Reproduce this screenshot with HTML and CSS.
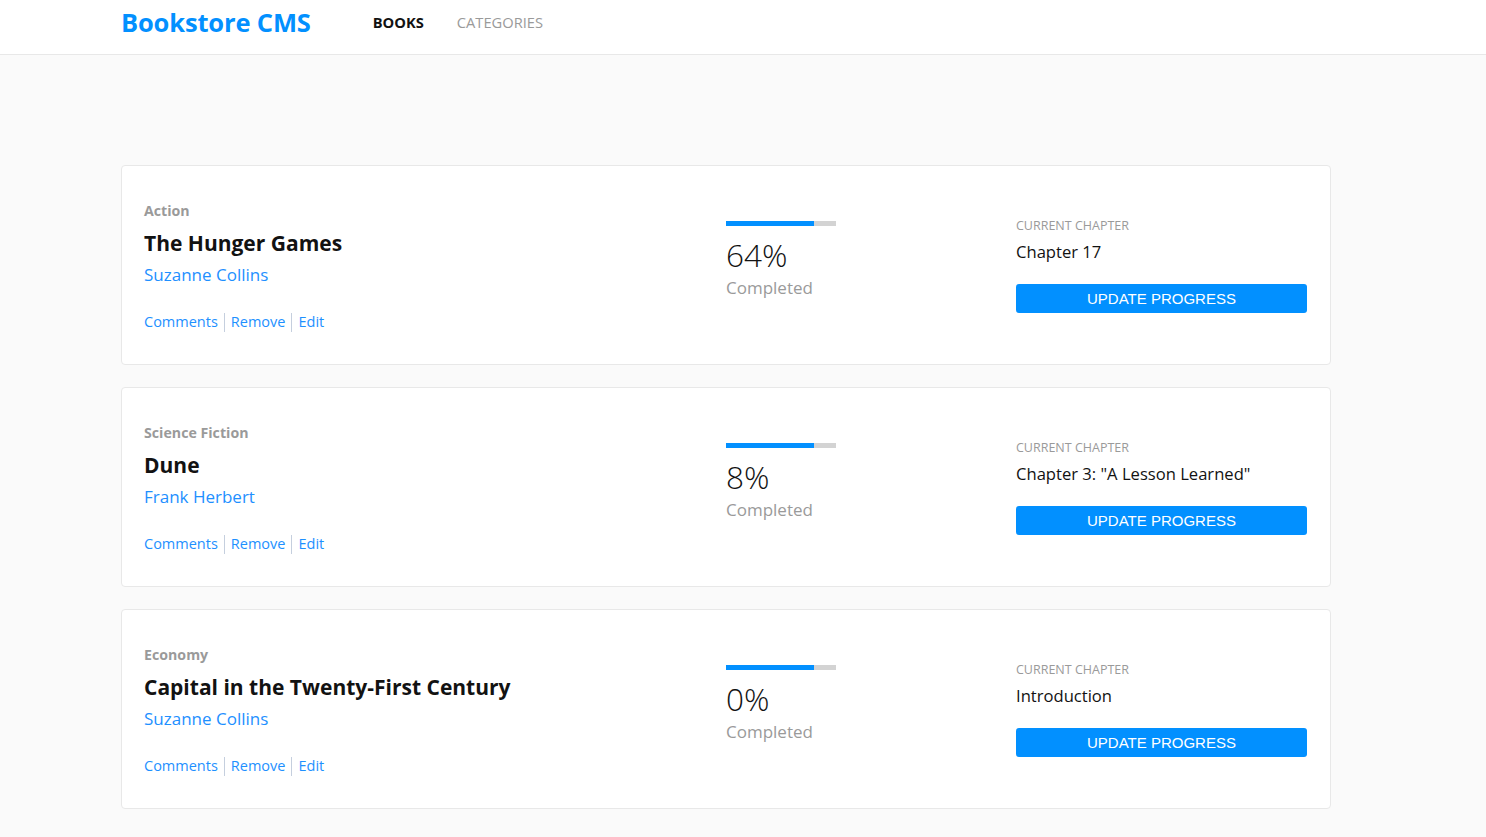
FILE: index.html
```html
<!DOCTYPE html>
<html lang="en">
<head>
<meta charset="utf-8">
<title>Bookstore CMS</title>
<link rel="stylesheet" href="styles.css">
</head>
<body>
<header class="header">
  <div class="header-inner">
    <a class="logo" href="#">Bookstore CMS</a>
    <nav class="nav">
      <a class="nav-link active" href="#">BOOKS</a>
      <a class="nav-link" href="#">CATEGORIES</a>
    </nav>
  </div>
</header>
<main class="main">
  <ul class="book-list">
    <li class="book-card">
      <div class="book-info">
        <span class="book-category">Action</span>
        <h2 class="book-title">The Hunger Games</h2>
        <span class="book-author">Suzanne Collins</span>
        <div class="book-actions">
          <a href="#" class="action">Comments</a><span class="sep"></span><a href="#" class="action">Remove</a><span class="sep"></span><a href="#" class="action">Edit</a>
        </div>
      </div>
      <div class="book-progress">
        <div class="bar"><div class="bar-fill" style="width:80%"></div></div>
        <span class="percent">64%</span>
        <span class="completed">Completed</span>
      </div>
      <div class="book-chapter">
        <span class="chapter-label">CURRENT CHAPTER</span>
        <span class="chapter-name">Chapter 17</span>
        <button class="update-btn" type="button">UPDATE PROGRESS</button>
      </div>
    </li>
    <li class="book-card">
      <div class="book-info">
        <span class="book-category">Science Fiction</span>
        <h2 class="book-title">Dune</h2>
        <span class="book-author">Frank Herbert</span>
        <div class="book-actions">
          <a href="#" class="action">Comments</a><span class="sep"></span><a href="#" class="action">Remove</a><span class="sep"></span><a href="#" class="action">Edit</a>
        </div>
      </div>
      <div class="book-progress">
        <div class="bar"><div class="bar-fill" style="width:80%"></div></div>
        <span class="percent">8%</span>
        <span class="completed">Completed</span>
      </div>
      <div class="book-chapter">
        <span class="chapter-label">CURRENT CHAPTER</span>
        <span class="chapter-name">Chapter 3: "A Lesson Learned"</span>
        <button class="update-btn" type="button">UPDATE PROGRESS</button>
      </div>
    </li>
    <li class="book-card">
      <div class="book-info">
        <span class="book-category">Economy</span>
        <h2 class="book-title">Capital in the Twenty-First Century</h2>
        <span class="book-author">Suzanne Collins</span>
        <div class="book-actions">
          <a href="#" class="action">Comments</a><span class="sep"></span><a href="#" class="action">Remove</a><span class="sep"></span><a href="#" class="action">Edit</a>
        </div>
      </div>
      <div class="book-progress">
        <div class="bar"><div class="bar-fill" style="width:80%"></div></div>
        <span class="percent">0%</span>
        <span class="completed">Completed</span>
      </div>
      <div class="book-chapter">
        <span class="chapter-label">CURRENT CHAPTER</span>
        <span class="chapter-name">Introduction</span>
        <button class="update-btn" type="button">UPDATE PROGRESS</button>
      </div>
    </li>
  </ul>
</main>
</body>
</html>
```
FILE: styles.css
```css
* { box-sizing: border-box; }
html, body { margin: 0; padding: 0; }
body {
  background: #fafafa;
  font-family: "Open Sans", "Noto Sans", sans-serif;
  color: #121212;
  min-height: 837px;
}
a { text-decoration: none; }

.header {
  background: #fff;
  border-bottom: 1px solid #e8e8e8;
  height: 55px;
}
.header-inner {
  display: flex;
  align-items: center;
  padding: 0 0 0 121px;
  height: 43px;
}
.logo {
  color: #0290ff;
  font-weight: 700;
  font-size: 25.5px;
  letter-spacing: -0.15px;
}
.nav {
  display: flex;
  gap: 33px;
  margin-left: 62px;
  padding-top: 1px;
}
.nav-link {
  font-size: 14.7px;
  color: #9a9a9a;
}
.nav-link.active {
  color: #121212;
  font-weight: 700;
}

.main {
  padding: 110px 155px 30px 121px;
}
.book-list {
  list-style: none;
  margin: 0;
  padding: 0;
  display: flex;
  flex-direction: column;
  gap: 22px;
}
.book-card {
  background: #fff;
  border: 1px solid #e8e8e8;
  border-radius: 4px;
  height: 200px;
  display: flex;
  align-items: center;
  padding: 0 23px 0 22px;
}
.book-info {
  flex: 1;
  display: flex;
  flex-direction: column;
  align-items: flex-start;
  padding-top: 3px;
}
.book-category {
  font-size: 14.2px;
  font-weight: 700;
  color: #9a9a9a;
  line-height: 20px;
}
.book-title {
  margin: 8px 0 0;
  font-size: 21px;
  font-weight: 700;
  line-height: 28px;
  color: #121212;
}
.book-author {
  margin-top: 6px;
  font-size: 17px;
  line-height: 24px;
  color: #1e90ff;
}
.book-actions {
  margin-top: 25px;
  display: flex;
  align-items: center;
  font-size: 14.5px;
  line-height: 20px;
}
.action { color: #1e90ff; }
.sep {
  width: 1px;
  height: 19px;
  background: #c5cfde;
  margin: 0 6px;
}

.book-progress {
  width: 290px;
  display: flex;
  flex-direction: column;
  align-items: flex-start;
  padding-bottom: 11px;
}
.bar {
  width: 110px;
  height: 5px;
  background: #d3d3d3;
}
.bar-fill {
  height: 100%;
  background: #0290ff;
}
.percent {
  margin-top: 10px;
  font-size: 31.5px;
  font-weight: 300;
  line-height: 38px;
  color: #121212;
}
.completed {
  margin-top: 3px;
  font-size: 17px;
  line-height: 22px;
  color: #9a9a9a;
}

.book-chapter {
  width: 291px;
  display: flex;
  flex-direction: column;
  align-items: flex-start;
}
.chapter-label {
  font-size: 12.5px;
  line-height: 18px;
  color: #9a9a9a;
}
.chapter-name {
  margin-top: 5px;
  font-size: 16.6px;
  line-height: 24px;
  color: #121212;
}
.update-btn {
  margin-top: 20px;
  width: 291px;
  height: 29px;
  border: none;
  border-radius: 3px;
  background: #0290ff;
  color: #fff;
  font-family: "Liberation Sans", Arial, sans-serif;
  font-size: 15px;
  padding: 0;
  cursor: pointer;
}
```
